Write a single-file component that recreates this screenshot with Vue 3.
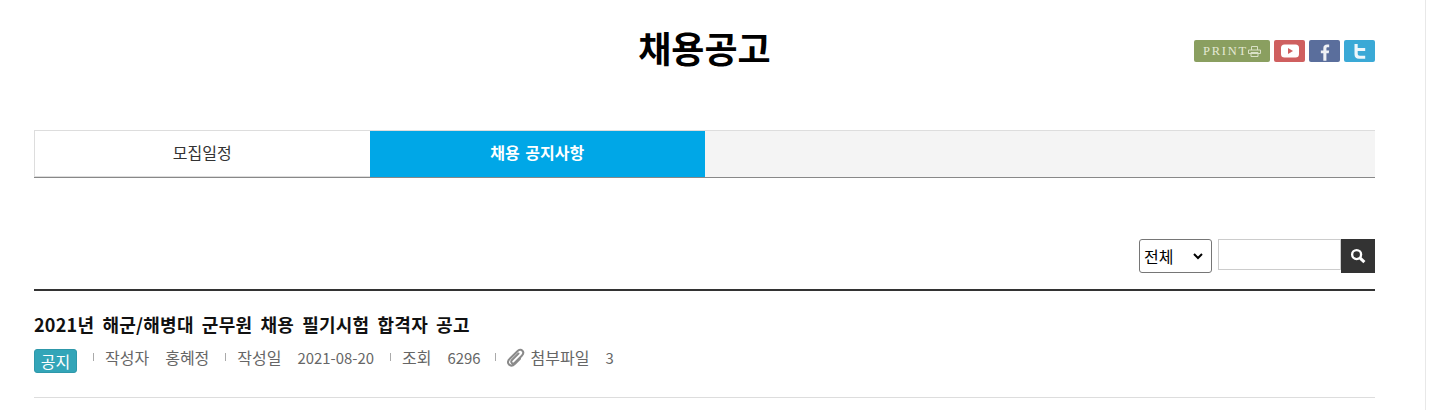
<script setup>
const tabs = [
  { label: '모집일정', active: false },
  { label: '채용 공지사항', active: true },
];
</script>

<template>
  <div class="page">
    <div class="content">
      <header class="head">
        <h1 class="title">채용공고</h1>
        <div class="sns">
          <span class="print">
            <span class="printText">PRINT</span>
            <svg width="13" height="11" viewBox="0 0 13 11" fill="none" stroke="#d9e0c6" stroke-width="1">
              <path d="M3.500 4V.5h6V4M.5 4h12v3.500H.5zM3 6.500h7v4H3z" />
            </svg>
          </span>
          <span class="snsBtn youtube">
            <svg width="20" height="14" viewBox="0 0 20 14">
              <rect x="1" y="0.5" width="18" height="13" rx="3.500" fill="#fff" />
              <path d="M8 4l5 3-5 3z" fill="#cf5f5f" />
            </svg>
          </span>
          <span class="snsBtn facebook">
            <svg width="10" height="19" viewBox="0 0 12 20">
              <path d="M4 20V11H1V7.500h3V5c0-3 1.800-4.500 4.500-4.500H11v3.300H9.300C8 3.800 7.700 4.400 7.700 5.400v2.100H11L10.500 11H7.700v9z" fill="#eef0f5" />
            </svg>
          </span>
          <span class="snsBtn twitter">
            <svg width="14" height="17" viewBox="0 0 14 17">
              <path d="M1.500 1h3.200v4h7.500v3H4.700v2.500c0 1.500.8 2.200 2.200 2.200h5.300v3H6c-3 0-4.500-1.700-4.500-4.500z" fill="#eef7fb" />
            </svg>
          </span>
        </div>
      </header>

      <nav class="tabs">
        <a v-for="tab in tabs" :key="tab.label" class="tab" :class="{ active: tab.active }">{{ tab.label }}</a>
      </nav>

      <form class="search" @submit.prevent>
        <div class="selectWrap">
          <select class="searchSelect">
            <option>전체</option>
          </select>
          <svg class="chevron" width="10" height="7" viewBox="0 0 10 7" fill="none" stroke="#000" stroke-width="2">
            <path d="M1 1l4 4 4-4" />
          </svg>
        </div>
        <div class="searchBox">
          <input class="searchInput" type="text" />
          <button class="searchBtn" type="button" aria-label="검색">
            <svg width="16" height="16" viewBox="0 0 15 15" fill="none" stroke="#fff">
              <circle cx="6.200" cy="6.200" r="4.200" stroke-width="2.200" />
              <path d="M9.500 9.500l4 3.800" stroke-width="2.800" />
            </svg>
          </button>
        </div>
      </form>

      <article class="post">
        <h2 class="postTitle">2021년 해군/해병대 군무원 채용 필기시험 합격자 공고</h2>
        <div class="meta">
          <span class="badge">공지</span>
          <span class="item"><span class="key">작성자</span><span class="val">홍혜정</span></span>
          <span class="item"><span class="key">작성일</span><span class="num">2021-08-20</span></span>
          <span class="item"><span class="key">조회</span><span class="num">6296</span></span>
          <span class="item file">
            <svg class="clip" width="18" height="19" viewBox="0 0 18 19" fill="none" stroke="#8a8a8a" stroke-width="2" stroke-linecap="round">
              <path d="M11.500 5.500L5 12c-1 1-1 2.300-.2 3s2 .7 3-.3l7-7c1.700-1.700 1.800-3.700.6-5s-3.300-1.200-5 .5L3 10.500c-2.300 2.300-2.300 4.700-1 6s3.700 1.500 6-.8l5-5" />
            </svg>
            <span class="key">첨부파일</span><span class="num">3</span>
          </span>
        </div>
      </article>
    </div>
    <div class="scrollTrack"></div>
  </div>
</template>

<style>
html,
body {
  overflow: hidden;
  background: #fff;
}
</style>

<style scoped>
.page {
  box-sizing: border-box;
  width: 1435px;
  height: 410px;
  display: flex;
  justify-content: space-between;
  padding-left: 34px;
  background: #fff;
  font-family: 'Noto Sans CJK KR', 'Open Sans', sans-serif;
  overflow: hidden;
}

.content {
  width: 1341px;
}

.scrollTrack {
  box-sizing: border-box;
  width: 10px;
  border-left: 1px solid #e8e8e8;
}

.head {
  display: flex;
  justify-content: center;
  position: relative;
  height: 130px;
}

.title {
  margin: 24px 0 0;
  font-size: 36px;
  line-height: 46px;
  font-weight: 700;
  color: #000;
}

.sns {
  position: absolute;
  top: 40px;
  right: 0;
  display: flex;
  gap: 4px;
}

.print {
  width: 76px;
  height: 22px;
  display: flex;
  align-items: center;
  justify-content: center;
  border-radius: 2px;
  background: #8a9f60;
}

.printText {
  font-family: 'Liberation Serif', serif;
  font-size: 12.500px;
  letter-spacing: 1.800px;
  color: #e4e9d4;
}

.snsBtn {
  width: 31px;
  height: 22px;
  display: flex;
  align-items: center;
  justify-content: center;
  border-radius: 2px;
  overflow: hidden;
}

.youtube {
  background: #cf5f5f;
}

.facebook {
  background: #5a6e9c;
  align-items: flex-end;
}

.twitter {
  background: #3aa9d6;
}

.tabs {
  box-sizing: border-box;
  height: 48px;
  display: flex;
  background: #f4f4f4;
  border-top: 1px solid #ddd;
  border-bottom: 1px solid #888;
}

.tab {
  box-sizing: border-box;
  width: 335.500px;
  display: flex;
  align-items: center;
  justify-content: center;
  padding-bottom: 3px;
  font-size: 16px;
  color: #333;
  background: #fff;
  border-left: 1px solid #ddd;
  border-bottom: 1px solid #ddd;
}

.tab.active {
  background: #00a7e7;
  border: 0;
  color: #fff;
  font-weight: 700;
  word-spacing: 2px;
  padding-bottom: 4px;
}

.search {
  display: flex;
  justify-content: flex-end;
  align-items: flex-start;
  gap: 6px;
  height: 113px;
  padding-top: 61px;
  box-sizing: border-box;
  border-bottom: 2px solid #333;
}

.selectWrap {
  position: relative;
  height: 34px;
}

.searchSelect {
  display: block;
  box-sizing: border-box;
  width: 73px;
  height: 34px;
  padding: 0 0 0 4px;
  border: 1px solid #767676;
  border-radius: 3px;
  background: #fff;
  appearance: none;
  font-family: inherit;
  font-size: 16px;
  color: #000;
}

.chevron {
  position: absolute;
  top: 14px;
  right: 9px;
  pointer-events: none;
}

.searchBox {
  display: flex;
  align-items: flex-start;
}

.searchInput {
  box-sizing: border-box;
  width: 123px;
  height: 31px;
  border: 1px solid #ccc;
  background: #fff;
  outline: none;
}

.searchBtn {
  width: 34px;
  height: 34px;
  padding: 0;
  border: 0;
  display: flex;
  align-items: center;
  justify-content: center;
  background: #333;
}

.post {
  box-sizing: border-box;
  height: 107px;
  padding-top: 20px;
  border-bottom: 1px solid #ddd;
}

.postTitle {
  margin: 0;
  font-size: 18px;
  line-height: 26px;
  font-weight: 700;
  letter-spacing: 0.250px;
  word-spacing: 3.800px;
  color: #111;
}

.meta {
  display: flex;
  align-items: center;
  margin-top: 12px;
  height: 24px;
  font-size: 16px;
  color: #666;
}

.badge {
  box-sizing: border-box;
  width: 43px;
  height: 24px;
  display: flex;
  align-items: center;
  justify-content: center;
  border-radius: 3px;
  background: #33a5b8;
  border: 1px solid #2e98aa;
  color: #fff;
}

.item {
  display: flex;
  align-items: center;
  margin-left: 16px;
  padding-bottom: 8px;
}

.item::before {
  content: '';
  width: 1px;
  height: 8px;
  margin-right: 11px;
  background: #aaa;
}

.key {
  margin-right: 16px;
}

.num {
  font-size: 14.900px;
}

.file {
  margin-left: 15px;
}

.clip {
  margin-right: 5px;
}
</style>
